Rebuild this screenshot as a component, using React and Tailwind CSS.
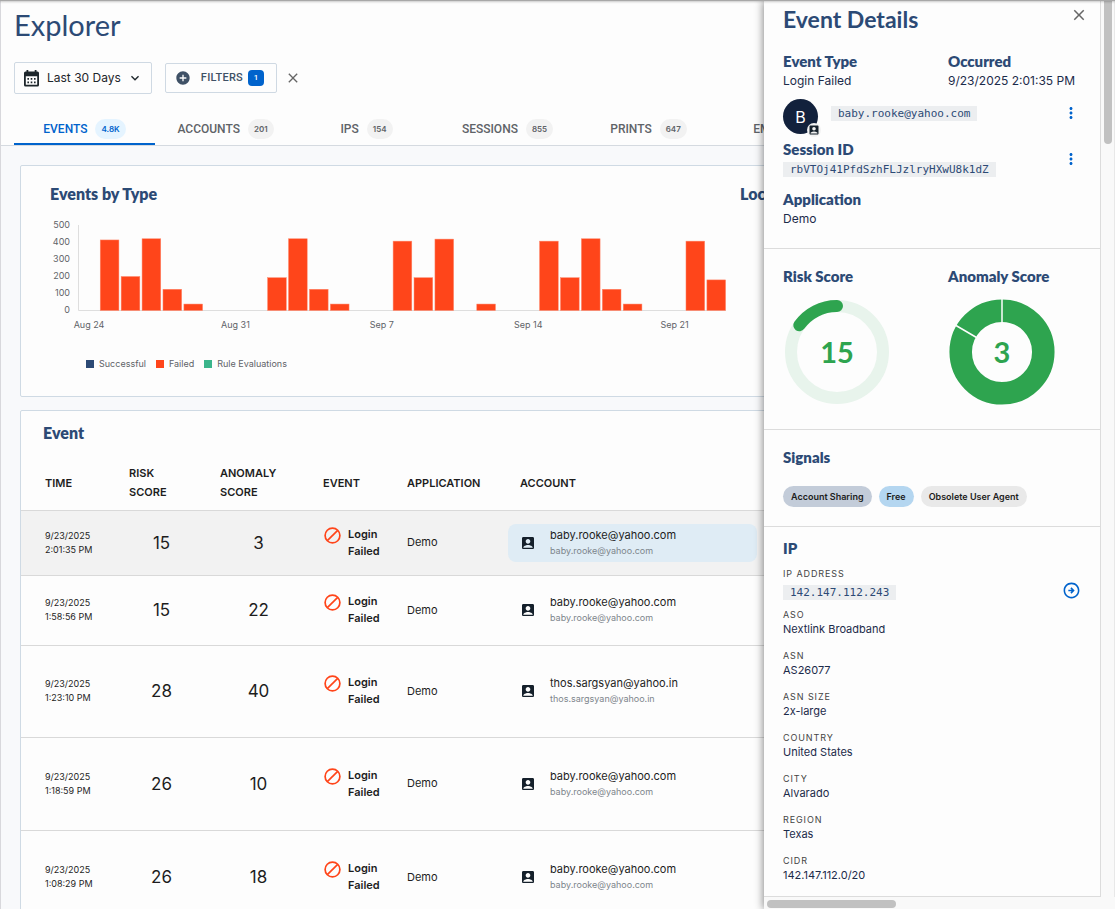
import React, { useState } from "react";
import { clsx } from "clsx";
import { MdAccountBox, MdAddCircle, MdClose, MdKeyboardArrowDown, MdMoreVert, MdOutlineArrowCircleRight } from "react-icons/md";

const tabs = [
    { name: "EVENTS", count: "4.8K" },
    { name: "ACCOUNTS", count: "201" },
    { name: "IPS", count: "154" },
    { name: "SESSIONS", count: "855" },
    { name: "PRINTS", count: "647" },
    { name: "EMAILS", count: "98" },
];

// failed events per day, day 0 is Aug 24
const failed = [
    0, 415, 200, 422, 125, 38, 0,
    0, 0, 193, 422, 125, 38, 0,
    0, 408, 193, 420, 0, 38, 0,
    0, 408, 193, 422, 125, 38, 0,
    0, 408, 180,
];

const weeks = ["Aug 24", "Aug 31", "Sep 7", "Sep 14", "Sep 21"];

const legend = [
    { name: "Successful", color: "bg-[#2c4a75]" },
    { name: "Failed", color: "bg-[#ff451a]" },
    { name: "Rule Evaluations", color: "bg-[#3bb58b]" },
];

const events = [
    { time: "2:01:35 PM", risk: 15, anomaly: 3, account: "baby.rooke@yahoo.com", height: "h-[65px]", selected: true },
    { time: "1:58:56 PM", risk: 15, anomaly: 22, account: "baby.rooke@yahoo.com", height: "h-[70px]" },
    { time: "1:23:10 PM", risk: 28, anomaly: 40, account: "thos.sargsyan@yahoo.in", height: "h-[92px]" },
    { time: "1:18:59 PM", risk: 26, anomaly: 10, account: "baby.rooke@yahoo.com", height: "h-[93px]" },
    { time: "1:08:29 PM", risk: 26, anomaly: 18, account: "baby.rooke@yahoo.com", height: "h-[93px]" },
];

const ipFields = [
    { label: "ASO", value: "Nextlink Broadband" },
    { label: "ASN", value: "AS26077" },
    { label: "ASN SIZE", value: "2x-large" },
    { label: "COUNTRY", value: "United States" },
    { label: "CITY", value: "Alvarado" },
    { label: "REGION", value: "Texas" },
    { label: "CIDR", value: "142.147.112.0/20" },
];

function CalendarIcon() {
    return (
        <svg width="15" height="17" viewBox="0 0 15 17" aria-hidden="true">
            <path fill="#1d262b" fillRule="evenodd" d="M2.500 0h1.800v1.500h6.400V0h1.800v1.500h1a1.500 1.500 0 0 1 1.500 1.500v12a1.500 1.500 0 0 1-1.500 1.500h-12A1.500 1.500 0 0 1 0 15V3a1.500 1.500 0 0 1 1.500-1.500h1zM1.800 6.300v8.500h11.400V6.300z" />
            <path fill="#1d262b" d="M6.700 8h1.600v1.800H6.700zM10 8h1.600v1.800H10zM3.400 11.500H5v1.800H3.400zM6.700 11.500h1.600v1.800H6.700zM10 11.500h1.600v1.800H10zM3.400 8H5v1.800H3.400z" />
        </svg>
    );
}

function BlockedIcon() {
    return (
        <svg width="17" height="17" viewBox="0 0 17 17" fill="none" stroke="#ff451a" strokeWidth="1.700" className="mt-px shrink-0" aria-hidden="true">
            <circle cx="8.500" cy="8.500" r="7.400" />
            <path d="M3.300 13.700 13.700 3.300" />
        </svg>
    );
}

function EventsChart() {
    return (
        <svg width="690" height="120" viewBox="0 0 690 120" className="block text-[9px]" fill="#5f6368">
            {[500, 400, 300, 200, 100, 0].map((n, i) => (
                <text key={n} x="20" y={14 + i * 17} textAnchor="end">{n}</text>
            ))}
            <path d="M28.500 11v85.500H676" fill="none" stroke="#dedede" />
            {failed.map((n, i) => n > 0 && (
                <rect key={i} x={29.3 + i * 20.92} y={96.5 - n * 0.17} width="18.700" height={n * 0.17} fill="#ff451a" stroke="#ff8a6e" strokeWidth="0.500" />
            ))}
            {weeks.map((w, i) => (
                <text key={w} x={39 + i * 146.4} y="114" textAnchor="middle">{w}</text>
            ))}
        </svg>
    );
}

function RiskDonut() {
    return (
        <svg width="106" height="106" viewBox="0 0 106 106" className="mt-3.5 block" fill="none">
            <circle cx="54" cy="53" r="46" stroke="#e8f4ec" strokeWidth="12" />
            <path d="M16.300 26.300A46 46 0 0 1 54 7" stroke="#2ea44f" strokeWidth="12" strokeLinecap="round" />
            <text x="54" y="64" textAnchor="middle" fill="#2ea44f" className="text-[29px] font-bold font-['Lato',sans-serif]">15</text>
        </svg>
    );
}

function AnomalyDonut() {
    return (
        <svg width="108" height="106" viewBox="0 0 108 106" className="mt-3.5 block" fill="none">
            <circle cx="54" cy="53" r="41.300" stroke="#2ea44f" strokeWidth="22.500" />
            <path d="M54 0v24M8 26.500l20.500 12" stroke="#fdfdfd" strokeWidth="1.500" />
            <text x="54" y="64" textAnchor="middle" fill="#2ea44f" className="text-[29px] font-bold font-['Lato',sans-serif]">3</text>
        </svg>
    );
}

function Label({ children }) {
    return <h3 className="font-['Lato',sans-serif] text-[15px] leading-[18px] font-extrabold text-[#2c4a75]">{children}</h3>;
}

function Code({ children }) {
    return (
        <code className="block h-[15px] w-fit bg-[#eceef0] px-[7px] font-['DejaVu_Sans_Mono',monospace] text-[11px] leading-[15px] text-[#2c4a75]">
            {children}
        </code>
    );
}

function Details() {
    return (
        <aside className="relative z-10 flex w-[351px] shrink-0 flex-col bg-[#f9f9f9] shadow-[-1px_0_8px_rgba(0,0,0,0.45)]">
            <div className="flex">
                <div className="min-w-0 flex-1 border-r border-b border-[#dcdcdc] bg-[#fdfdfd] text-[#1c2b4a]">
                    <section className="border-b border-[#dcdcdc] pt-[5px] pr-3 pb-[18px] pl-[19px]">
                        <div className="flex items-start justify-between">
                            <h2 className="pt-px font-['Lato',sans-serif] text-[23px] leading-6 font-bold text-[#2c4a75]">Event Details</h2>
                            <button aria-label="Close"><MdClose className="size-[18px] text-[#666]" /></button>
                        </div>
                        <div className="mt-[21px] grid grid-cols-[165px_1fr] text-xs leading-[22px]">
                            <div><Label>Event Type</Label><p>Login Failed</p></div>
                            <div><Label>Occurred</Label><p>9/23/2025 2:01:35 PM</p></div>
                        </div>
                        <div className="mt-[7px] flex items-start pr-2">
                            <div className="relative flex size-[35px] items-center justify-center rounded-full bg-[#12213c] text-base text-white">
                                B
                                <span className="absolute -right-[3px] -bottom-[3px] rounded-full bg-[#f2f2f2] p-px"><MdAccountBox className="size-3 text-[#15202b]" /></span>
                            </div>
                            <div className="mt-[7px] ml-[13px] flex-1"><Code>baby.rooke@yahoo.com</Code></div>
                            <button aria-label="Account actions" className="mt-[5px]"><MdMoreVert className="size-[18px] text-[#0063cc]" /></button>
                        </div>
                        <div className="mt-1.5 flex items-center justify-between pr-2">
                            <div><Label>Session ID</Label><div className="mt-1"><Code>rbVTOj41PfdSzhFLJzlryHXwU8k1dZ</Code></div></div>
                            <button aria-label="Session actions"><MdMoreVert className="size-[18px] text-[#0063cc]" /></button>
                        </div>
                        <div className="mt-[13px] text-xs leading-[22px]"><Label>Application</Label><p>Demo</p></div>
                    </section>

                    <section className="grid grid-cols-[165px_1fr] border-b border-[#dcdcdc] pt-[18px] pb-6 pl-[19px]">
                        <div><Label>Risk Score</Label><RiskDonut /></div>
                        <div><Label>Anomaly Score</Label><AnomalyDonut /></div>
                    </section>

                    <section className="border-b border-[#dcdcdc] pt-[18px] pb-[19px] pl-[19px]">
                        <Label>Signals</Label>
                        <div className="mt-5 flex gap-[7px] text-[9px] leading-[21px] font-semibold text-[#1d1d1d]">
                            <span className="rounded-full bg-[#c3ccd9] px-2">Account Sharing</span>
                            <span className="rounded-full bg-[#b4d6f0] px-2">Free</span>
                            <span className="rounded-full bg-[#e9e9e9] px-2">Obsolete User Agent</span>
                        </div>
                    </section>

                    <section className="pt-3 pr-[19px] pb-[13px] pl-[19px]">
                        <Label>IP</Label>
                        <div className="mt-[9px] flex items-end justify-between">
                            <div>
                                <p className="text-[9px] leading-[15px] tracking-widest text-[#444]">IP ADDRESS</p>
                                <div className="mt-1"><Code>142.147.112.243</Code></div>
                            </div>
                            <button aria-label="Open IP"><MdOutlineArrowCircleRight className="size-[19px] text-[#0063cc]" /></button>
                        </div>
                        <dl className="mt-[7px] flex flex-col gap-[11px]">
                            {ipFields.map((item) => (
                                <div key={item.label}>
                                    <dt className="text-[9px] leading-[15px] tracking-widest text-[#444]">{item.label}</dt>
                                    <dd className="text-[11px] leading-[15px]">{item.value}</dd>
                                </div>
                            ))}
                        </dl>
                    </section>
                </div>
                <div className="flex w-3.5 shrink-0 justify-center border-r border-[#e8e8e8]">
                    <div className="h-[143px] w-2 rounded-b-full bg-[#c1c1c1]" />
                </div>
            </div>
            <div className="mt-[3px] ml-[3px] h-2 w-[129px] rounded-full bg-[#c1c1c1]" />
        </aside>
    );
}

function EventTable() {
    return (
        <table className="w-full table-fixed border-collapse text-left text-[#1d1d1d]">
            <colgroup>
                <col className="w-[96px]" />
                <col className="w-[91px]" />
                <col className="w-[103px]" />
                <col className="w-[84px]" />
                <col className="w-[101px]" />
                <col />
            </colgroup>
            <thead>
                <tr className="h-[54px] text-[11px] leading-[19px]">
                    <th className="pt-px pl-6 font-semibold">TIME</th>
                    <th className="pt-px pr-8 pl-3 font-semibold">RISK SCORE</th>
                    <th className="pt-px pr-8 pl-3 font-semibold">ANOMALY SCORE</th>
                    <th className="pt-px pl-3 font-semibold">EVENT</th>
                    <th className="pt-px pl-3 font-semibold">APPLICATION</th>
                    <th className="pt-px pl-6 font-semibold">ACCOUNT</th>
                </tr>
            </thead>
            <tbody>
                {events.map((item, index) => (
                    <tr key={index} className={clsx("border-t border-[#d9d9d9]", item.height, item.selected && "bg-[#f2f2f2]")}>
                        <td className="pl-6 text-[9px] leading-[14px]">9/23/2025<br />{item.time}</td>
                        <td className="pt-0.5 pr-0.5 text-center text-[17px]">{item.risk}</td>
                        <td className="pt-0.5 pr-0.5 text-center text-[17px]">{item.anomaly}</td>
                        <td className="pl-[13px]">
                            <div className="flex gap-[7px] text-[11px] leading-[17px] font-semibold"><BlockedIcon /><span>Login<br />Failed</span></div>
                        </td>
                        <td className="pl-3 text-[11px]">Demo</td>
                        <td className="pl-3">
                            <div className={clsx("flex h-[38px] w-[249px] items-center gap-3.5 rounded-lg pl-3", item.selected && "bg-[#dfecf5]")}>
                                <MdAccountBox className="size-4 text-[#15202b]" />
                                <div className="text-[11px] leading-4">
                                    <p>{item.account}</p>
                                    <p className="text-[9px] text-[#7d858c]">{item.account}</p>
                                </div>
                            </div>
                        </td>
                    </tr>
                ))}
            </tbody>
        </table>
    );
}

function App() {
    const [activeTab, setActiveTab] = useState("EVENTS");

    return (
        <div className="flex h-screen flex-col overflow-hidden bg-[#f8f9fb] font-['Inter',sans-serif]">
            <div className="relative z-20 h-px shrink-0 bg-[#a8a8a8] shadow-[0_1px_2px_rgba(0,0,0,0.3)]" />
            <div className="flex min-h-0 flex-1">
                <main className="min-w-0 flex-1 overflow-hidden border-l border-[#d8d8dc]">
                    <div className="min-w-[1080px]">
                        <header className="border-b border-[#d5dae0] bg-[#fdfdfd] pt-1 pl-[13px]">
                            <h1 className="font-['Lato',sans-serif] text-[29px] leading-10 text-[#2c4a75]">Explorer</h1>
                            <div className="mt-[17px] flex items-center">
                                <button className="flex h-8 items-center rounded-xs border border-[#cfd9e3] pr-2 pl-[9px] text-xs text-[#1d262b]">
                                    <CalendarIcon />
                                    <span className="mx-1.5 ml-2">Last 30 Days</span>
                                    <MdKeyboardArrowDown className="size-4" />
                                </button>
                                <button className="ml-[13px] flex h-[30px] items-center rounded-xs border border-[#cfd9e3] pr-3 pl-[9px] font-['Roboto',sans-serif] text-[11px] font-medium text-[#3f5166]">
                                    <MdAddCircle className="size-4" />
                                    <span className="mr-[5px] ml-2.5 tracking-wide">FILTERS</span>
                                    <span className="size-4 rounded bg-[#0063cc] text-center text-[8px] leading-4 text-white">1</span>
                                </button>
                                <button aria-label="Clear filters" className="ml-2"><MdClose className="size-4 text-[#666]" /></button>
                            </div>
                            <nav className="mt-[19px] flex">
                                {tabs.map((tab) => (
                                    <button
                                        key={tab.name}
                                        className={clsx(
                                            "flex h-8 w-[141px] items-center justify-center gap-2 border-y-2 border-t-transparent font-['Roboto',sans-serif] text-xs font-medium",
                                            tab.name === activeTab ? "border-b-[#0063cc] text-[#0063cc]" : "border-b-transparent text-[#5f6368]"
                                        )}
                                        onClick={() => setActiveTab(tab.name)}
                                    >
                                        {tab.name}
                                        <span className={clsx("h-5 rounded-full px-1.5 text-[8px] leading-5 font-semibold font-['Inter',sans-serif]", tab.name === activeTab ? "bg-[#e5f4ff]" : "bg-[#f2f2f2]")}>
                                            {tab.count}
                                        </span>
                                    </button>
                                ))}
                            </nav>
                        </header>

                        <section className="mt-[19px] ml-[19px] flex rounded-xs border border-[#cfdae4] bg-[#fdfdfd] pt-4 pb-6 pl-[29px]">
                            <div className="w-[690px] shrink-0">
                                <h2 className="mb-2 font-['Lato',sans-serif] text-base leading-6 font-extrabold text-[#2c4a75]">Events by Type</h2>
                                <EventsChart />
                                <ul className="mt-[22px] ml-9 flex gap-2.5 text-[9px] leading-4 text-[#5f6368]">
                                    {legend.map((item) => (
                                        <li key={item.name} className="flex items-center gap-[5px]">
                                            <span className={clsx("size-2", item.color)} />
                                            {item.name}
                                        </li>
                                    ))}
                                </ul>
                            </div>
                            <h2 className="font-['Lato',sans-serif] text-base leading-6 font-extrabold text-[#2c4a75]">Locations</h2>
                        </section>

                        <section className="mt-[13px] ml-[19px] rounded-xs border border-[#cfdae4] bg-[#fdfdfd]">
                            <h2 className="pt-2.5 pb-[11px] pl-[22px] font-['Lato',sans-serif] text-base leading-6 font-extrabold text-[#2c4a75]">Event</h2>
                            <EventTable />
                        </section>
                    </div>
                </main>
                <Details />
            </div>
        </div>
    );
}

export default App;
